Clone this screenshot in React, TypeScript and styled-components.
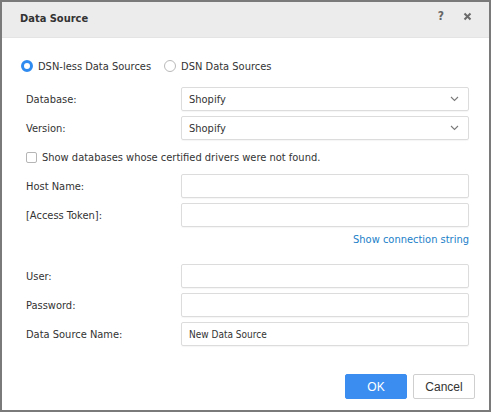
import React from "react";
import styled, { createGlobalStyle } from "styled-components";

const Global = createGlobalStyle`
  html, body { margin: 0; padding: 0; background: #ffffff; }
  * { box-sizing: border-box; }
`;

const font = `"DejaVu Sans Condensed", "DejaVu Sans", sans-serif`;

const Dialog = styled.div`
  width: 491px;
  height: 412px;
  border: 2px solid #7a7a7a;
  background: #ffffff;
  display: flex;
  flex-direction: column;
  font-family: ${font};
  font-stretch: condensed;
  color: #333333;
`;

const Header = styled.div`
  height: 36px;
  background: #ececec;
  border-bottom: 1px solid #e4e4e4;
  display: flex;
  align-items: center;
  padding: 0 14px 3px 18px;
`;

const Title = styled.div`
  flex: 1;
  font-size: 11px;
  font-weight: bold;
  color: #333333;
`;

const HeaderIcon = styled.span`
  width: 16px;
  height: 16px;
  display: flex;
  align-items: center;
  justify-content: center;
  margin-left: 10px;
  margin-top: -4px;
  color: #666666;
  font-size: 12px;
  font-weight: bold;
`;

const Body = styled.div`
  padding: 20px 20px 0 19px;
  display: flex;
  flex-direction: column;
`;

const RadioRow = styled.div`
  height: 16px;
  display: flex;
  align-items: center;
  font-size: 11px;
  margin-bottom: 13px;
`;

const RadioItem = styled.label`
  display: flex;
  align-items: center;
  margin-right: 13px;
`;

const RadioDot = styled.span<{ $checked?: boolean }>`
  width: 12px;
  height: 12px;
  border-radius: 50%;
  border: ${(p) => (p.$checked ? "3.5px solid #2f8bf0" : "1px solid #b9b9b9")};
  background: #ffffff;
  margin-right: 5px;
  flex: none;
`;

const Grid = styled.div`
  display: grid;
  grid-template-columns: 155px 288px;
  grid-auto-rows: 24px;
  row-gap: 5px;
  margin-left: 5px;
  align-items: center;
`;

const Label = styled.div`
  font-size: 11px;
  color: #333333;
`;

const Box = styled.div`
  height: 24px;
  border: 1px solid #dcdcdc;
  border-radius: 2px;
  box-shadow: 0 1px 1px rgba(0, 0, 0, 0.04);
  display: flex;
  align-items: center;
  padding: 0 8px 0 7px;
  font-size: 11px;
  color: #333333;
`;

const SelectBox = styled(Box)`
  justify-content: space-between;
  padding-right: 9px;
`;

const InputText = styled.span`
  font-size: 10px;
  color: #333333;
`;

const CheckRow = styled.div`
  height: 16px;
  display: flex;
  align-items: center;
  margin: 9px 0 9px 5px;
  font-size: 11px;
`;

const CheckBox = styled.span`
  width: 11px;
  height: 11px;
  border: 1px solid #b5b5b5;
  border-radius: 2px;
  margin-right: 5px;
  flex: none;
`;

const LinkRow = styled.div`
  height: 14px;
  display: flex;
  justify-content: flex-end;
  align-items: center;
  margin: 5px 0 18px 0;
`;

const Link = styled.a`
  font-size: 11px;
  color: #1b80c8;
  text-decoration: none;
`;

const Footer = styled.div`
  display: flex;
  justify-content: flex-end;
  gap: 6px;
  padding: 28px 14px 0 0;
`;

const Button = styled.button<{ $primary?: boolean }>`
  width: 62px;
  height: 25px;
  border-radius: 2px;
  font-family: "Liberation Sans", Arial, sans-serif;
  font-size: 12px;
  cursor: pointer;
  border: 1px solid ${(p) => (p.$primary ? "#3b8ef0" : "#cfcfcf")};
  background: ${(p) => (p.$primary ? "#3b8ef0" : "#ffffff")};
  color: ${(p) => (p.$primary ? "#ffffff" : "#333333")};
  padding: 0;
`;

const Chevron = () => (
  <svg width="9" height="6" viewBox="0 0 9 6">
    <path d="M1 1 L4.5 4.5 L8 1" fill="none" stroke="#7a7a7a" strokeWidth="1.1" />
  </svg>
);

const CloseIcon = () => (
  <svg width="9" height="9" viewBox="0 0 9 9">
    <path d="M1.5 1.5 L7.5 7.5 M7.5 1.5 L1.5 7.5" stroke="#6a6a6a" strokeWidth="2" />
  </svg>
);

export default function App() {
  return (
    <>
      <Global />
      <Dialog>
        <Header>
          <Title>Data Source</Title>
          <HeaderIcon>?</HeaderIcon>
          <HeaderIcon>
            <CloseIcon />
          </HeaderIcon>
        </Header>
        <Body>
          <RadioRow>
            <RadioItem>
              <RadioDot $checked />
              DSN-less Data Sources
            </RadioItem>
            <RadioItem>
              <RadioDot />
              DSN Data Sources
            </RadioItem>
          </RadioRow>
          <Grid>
            <Label>Database:</Label>
            <SelectBox>
              Shopify
              <Chevron />
            </SelectBox>
            <Label>Version:</Label>
            <SelectBox>
              Shopify
              <Chevron />
            </SelectBox>
          </Grid>
          <CheckRow>
            <CheckBox />
            Show databases whose certified drivers were not found.
          </CheckRow>
          <Grid>
            <Label>Host Name:</Label>
            <Box />
            <Label>[Access Token]:</Label>
            <Box />
          </Grid>
          <LinkRow>
            <Link>Show connection string</Link>
          </LinkRow>
          <Grid>
            <Label>User:</Label>
            <Box />
            <Label>Password:</Label>
            <Box />
            <Label>Data Source Name:</Label>
            <Box>
              <InputText>New Data Source</InputText>
            </Box>
          </Grid>
        </Body>
        <Footer>
          <Button $primary>OK</Button>
          <Button>Cancel</Button>
        </Footer>
      </Dialog>
    </>
  );
}
